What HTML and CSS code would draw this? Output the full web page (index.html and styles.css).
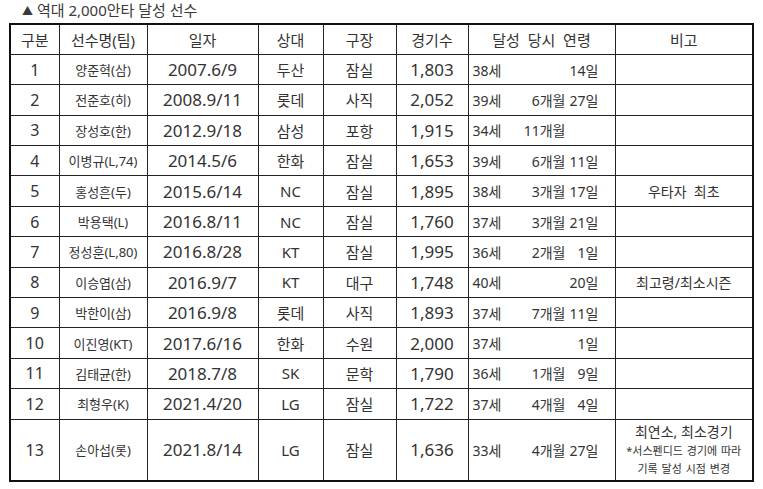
FILE: index.html
```html
<!DOCTYPE html>
<html lang="ko">
<head>
<meta charset="utf-8">
<title>역대 2,000안타 달성 선수</title>
<link rel="stylesheet" href="styles.css">
</head>
<body>
<div class="page">
  <h1 class="title"><span class="tri">▲</span> 역대 2,000안타 달성 선수</h1>
  <table class="records">
    <colgroup>
      <col class="c-no"><col class="c-name"><col class="c-date"><col class="c-opp">
      <col class="c-park"><col class="c-games"><col class="c-age"><col class="c-note">
    </colgroup>
    <thead>
      <tr>
        <th>구분</th><th>선수명(팀)</th><th>일자</th><th>상대</th><th>구장</th><th>경기수</th><th>달성&nbsp; 당시&nbsp; 연령</th><th>비고</th>
      </tr>
    </thead>
    <tbody>
      <tr><td class="no">1</td><td class="name">양준혁(삼)</td><td class="num">2007.6/9</td><td class="ko">두산</td><td class="ko">잠실</td><td class="num">1,803</td><td class="age"><div class="age-row"><span class="y">38세</span><span class="m"></span><span class="d">14일</span></div></td><td class="note"></td></tr>
      <tr><td class="no">2</td><td class="name">전준호(히)</td><td class="num">2008.9/11</td><td class="ko">롯데</td><td class="ko">사직</td><td class="num">2,052</td><td class="age"><div class="age-row"><span class="y">39세</span><span class="m">6개월</span><span class="d">27일</span></div></td><td class="note"></td></tr>
      <tr><td class="no">3</td><td class="name">장성호(한)</td><td class="num">2012.9/18</td><td class="ko">삼성</td><td class="ko">포항</td><td class="num">1,915</td><td class="age"><div class="age-row"><span class="y">34세</span><span class="m">11개월</span><span class="d"></span></div></td><td class="note"></td></tr>
      <tr><td class="no">4</td><td class="name">이병규(L,74)</td><td class="num">2014.5/6</td><td class="ko">한화</td><td class="ko">잠실</td><td class="num">1,653</td><td class="age"><div class="age-row"><span class="y">39세</span><span class="m">6개월</span><span class="d">11일</span></div></td><td class="note"></td></tr>
      <tr><td class="no">5</td><td class="name">홍성흔(두)</td><td class="num">2015.6/14</td><td class="ko">NC</td><td class="ko">잠실</td><td class="num">1,895</td><td class="age"><div class="age-row"><span class="y">38세</span><span class="m">3개월</span><span class="d">17일</span></div></td><td class="note">우타자&nbsp; 최초</td></tr>
      <tr><td class="no">6</td><td class="name">박용택(L)</td><td class="num">2016.8/11</td><td class="ko">NC</td><td class="ko">잠실</td><td class="num">1,760</td><td class="age"><div class="age-row"><span class="y">37세</span><span class="m">3개월</span><span class="d">21일</span></div></td><td class="note"></td></tr>
      <tr><td class="no">7</td><td class="name">정성훈(L,80)</td><td class="num">2016.8/28</td><td class="ko">KT</td><td class="ko">잠실</td><td class="num">1,995</td><td class="age"><div class="age-row"><span class="y">36세</span><span class="m">2개월</span><span class="d">1일</span></div></td><td class="note"></td></tr>
      <tr><td class="no">8</td><td class="name">이승엽(삼)</td><td class="num">2016.9/7</td><td class="ko">KT</td><td class="ko">대구</td><td class="num">1,748</td><td class="age"><div class="age-row"><span class="y">40세</span><span class="m"></span><span class="d">20일</span></div></td><td class="note">최고령/최소시즌</td></tr>
      <tr><td class="no">9</td><td class="name">박한이(삼)</td><td class="num">2016.9/8</td><td class="ko">롯데</td><td class="ko">사직</td><td class="num">1,893</td><td class="age"><div class="age-row"><span class="y">37세</span><span class="m">7개월</span><span class="d">11일</span></div></td><td class="note"></td></tr>
      <tr><td class="no">10</td><td class="name">이진영(KT)</td><td class="num">2017.6/16</td><td class="ko">한화</td><td class="ko">수원</td><td class="num">2,000</td><td class="age"><div class="age-row"><span class="y">37세</span><span class="m"></span><span class="d">1일</span></div></td><td class="note"></td></tr>
      <tr><td class="no">11</td><td class="name">김태균(한)</td><td class="num">2018.7/8</td><td class="ko">SK</td><td class="ko">문학</td><td class="num">1,790</td><td class="age"><div class="age-row"><span class="y">36세</span><span class="m">1개월</span><span class="d">9일</span></div></td><td class="note"></td></tr>
      <tr><td class="no">12</td><td class="name">최형우(K)</td><td class="num">2021.4/20</td><td class="ko">LG</td><td class="ko">잠실</td><td class="num">1,722</td><td class="age"><div class="age-row"><span class="y">37세</span><span class="m">4개월</span><span class="d">4일</span></div></td><td class="note"></td></tr>
      <tr class="tall"><td class="no">13</td><td class="name">손아섭(롯)</td><td class="num">2021.8/14</td><td class="ko">LG</td><td class="ko">잠실</td><td class="num">1,636</td><td class="age"><div class="age-row"><span class="y">33세</span><span class="m">4개월</span><span class="d">27일</span></div></td><td class="note"><div class="note-main">최연소, 최소경기</div><div class="note-small">*서스펜디드 경기에 따라</div><div class="note-small">기록 달성 시점 변경</div></td></tr>
    </tbody>
  </table>
</div>
</body>
</html>
```

FILE: styles.css
```css
html, body {
  margin: 0;
  padding: 0;
  background: #ffffff;
}

body {
  font-family: "Noto Sans", "Noto Sans CJK KR", sans-serif;
  color: #333333;
}

.page {
  width: 763px;
}

.title {
  margin: 0;
  padding: 0 0 0 22px;
  height: 23px;
  line-height: 21px;
  font-size: 15px;
  font-weight: 400;
  color: #3a3a3a;
}

.tri {
  font-size: 11px;
  position: relative;
  top: -1px;
}

.records {
  margin-left: 9px;
  border-collapse: collapse;
  table-layout: fixed;
  width: 745px;
  border: 2px solid #111;
}

.c-no { width: 49px; }
.c-name { width: 88px; }
.c-date { width: 111px; }
.c-opp { width: 65px; }
.c-park { width: 73px; }
.c-games { width: 72px; }
.c-age { width: 147px; }
.c-note { width: 138px; }

.records th,
.records td {
  border: 1px solid #222;
  padding: 0;
  text-align: center;
  vertical-align: middle;
  white-space: nowrap;
  font-weight: 400;
}

.records tr {
  height: 30.4px;
}

.records tr.tall {
  height: 62px;
}

.records th {
  font-size: 15px;
  color: #333333;
}

.no {
  font-size: 16px;
}

.name {
  font-size: 13px;
}

.num {
  font-size: 17px;
}

.ko {
  font-size: 15px;
}

.age {
  font-size: 14px;
}

.records td.age {
  text-align: left;
  padding-left: 4px;
}

.age-row {
  display: flex;
}

.age-row .y {
  width: 48px;
}

.age-row .m {
  width: 45px;
  text-align: right;
}

.age-row .d {
  width: 33px;
  text-align: right;
}

.note {
  font-size: 14px;
}

.note-main {
  font-size: 14px;
  line-height: 20px;
}

.note-small {
  font-size: 11px;
  line-height: 18px;
  word-spacing: 1px;
}
```
